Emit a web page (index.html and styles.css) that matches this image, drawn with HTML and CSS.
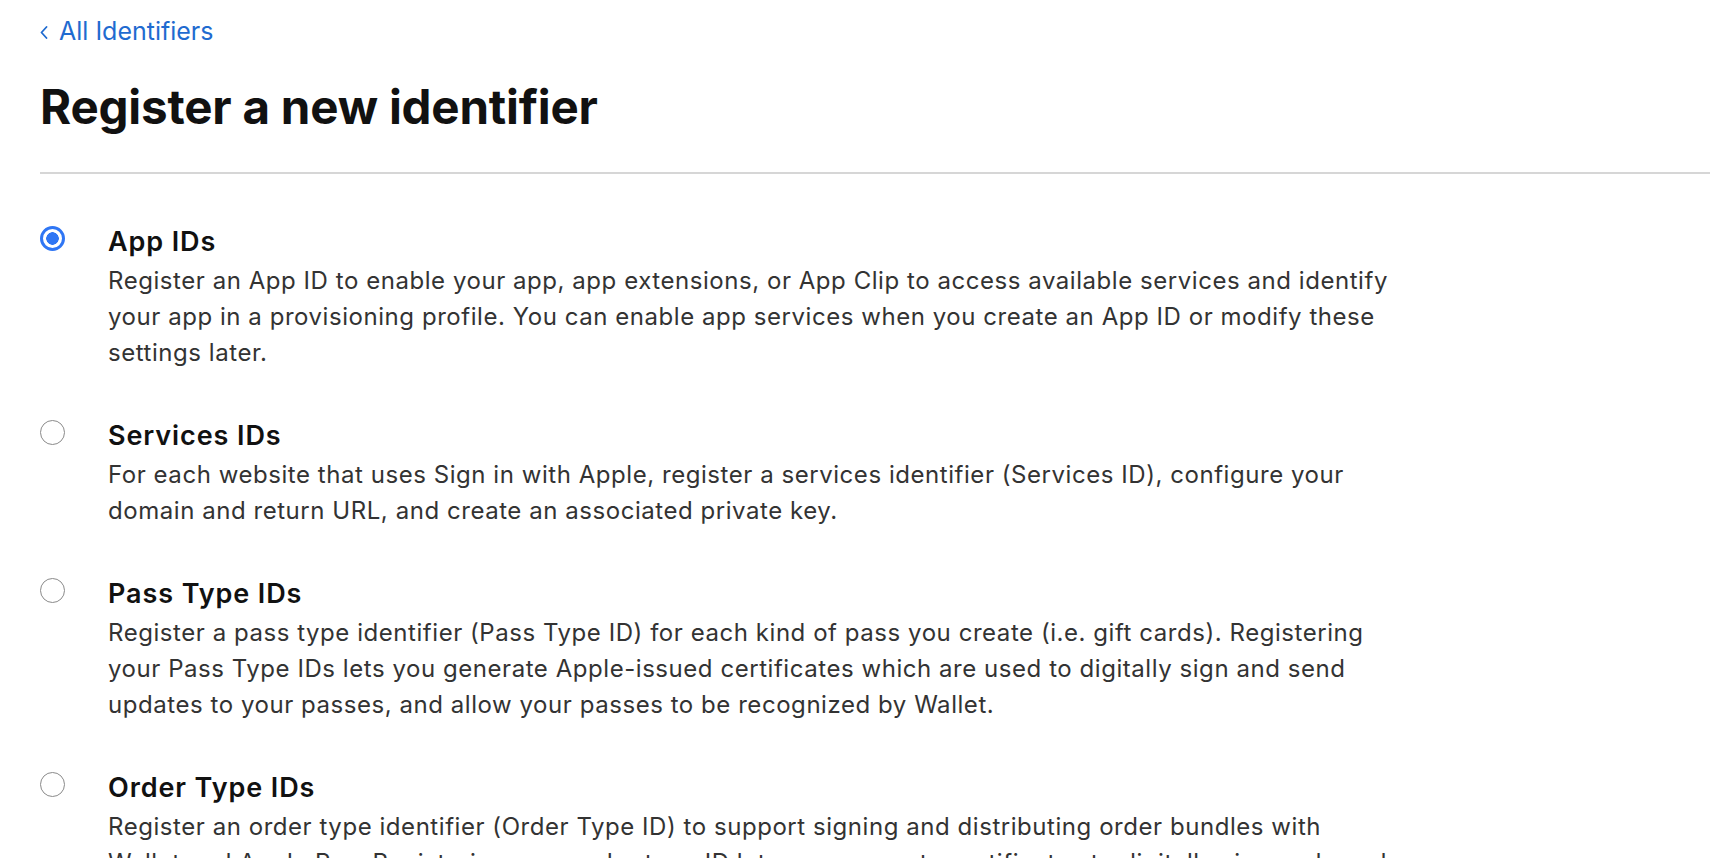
FILE: index.html
```html
<!DOCTYPE html>
<html lang="en">
<head>
<meta charset="utf-8">
<title>Register a new identifier</title>
<link rel="stylesheet" href="styles.css">
</head>
<body>
<div class="page">
  <a class="back" href="#">
    <svg class="chev" width="8" height="13" viewBox="0 0 8 13" aria-hidden="true"><path d="M6.5 1 L1.5 6.5 L6.5 12" fill="none" stroke="currentColor" stroke-width="1.8" stroke-linecap="round" stroke-linejoin="round"/></svg>
    <span>All Identifiers</span>
  </a>
  <h1 class="title">Register a new identifier</h1>
</div>
<hr class="divider">
<div class="page">
  <ul class="options">
    <li class="option">
      <span class="radio checked"></span>
      <div class="body">
        <h2 class="name">App IDs</h2>
        <p class="desc">Register an App ID to enable your app, app extensions, or App Clip to access available services and identify your app in a provisioning profile. You can enable app services when you create an App ID or modify these settings later.</p>
      </div>
    </li>
    <li class="option">
      <span class="radio"></span>
      <div class="body">
        <h2 class="name">Services IDs</h2>
        <p class="desc">For each website that uses Sign in with Apple, register a services identifier (Services ID), configure your domain and return URL, and create an associated private key.</p>
      </div>
    </li>
    <li class="option">
      <span class="radio"></span>
      <div class="body">
        <h2 class="name">Pass Type IDs</h2>
        <p class="desc">Register a pass type identifier (Pass Type ID) for each kind of pass you create (i.e. gift cards). Registering your Pass Type IDs lets you generate Apple-issued certificates which are used to digitally sign and send updates to your passes, and allow your passes to be recognized by Wallet.</p>
      </div>
    </li>
    <li class="option">
      <span class="radio"></span>
      <div class="body">
        <h2 class="name">Order Type IDs</h2>
        <p class="desc">Register an order type identifier (Order Type ID) to support signing and distributing order bundles with Wallet and Apple Pay. Registering your order type ID lets you generate certificates to digitally sign and send updates to your orders.</p>
      </div>
    </li>
  </ul>
</div>
</body>
</html>
```

FILE: styles.css
```css
html, body {
  margin: 0;
  padding: 0;
  background: #ffffff;
}
body {
  font-family: Inter, "Noto Sans", "Liberation Sans", sans-serif;
  color: #1d1d1f;
  overflow: hidden;
}
.page {
  padding-left: 40px;
}
.back {
  display: flex;
  align-items: center;
  gap: 11px;
  height: 62px;
  color: #1f6bd0;
  text-decoration: none;
  font-size: 25px;
  line-height: 62px;
}
.chev {
  display: block;
  margin-top: 2px;
}
.title {
  margin: 0;
  font-size: 47.5px;
  font-weight: 700;
  line-height: 90px;
  color: #111111;
  letter-spacing: -0.2px;
}
.divider {
  margin: 20px 0 0 40px;
  border: 0;
  height: 2px;
  background: #d6d6d6;
}
.options {
  list-style: none;
  margin: 0;
  padding: 47px 0 0 0;
}
.option {
  display: flex;
  gap: 43px;
  margin-bottom: 44px;
}
.radio {
  flex: none;
  box-sizing: border-box;
  width: 25px;
  height: 25px;
  margin-top: 5px;
  border-radius: 50%;
  border: 1.5px solid #8a8a8a;
  background: #fff;
}
.radio.checked {
  border: 3px solid #2f76f4;
  background: radial-gradient(circle, #2f76f4 0 6px, #fff 6.5px);
}
.body {
  width: 1285px;
}
.name {
  margin: 0;
  font-size: 27px;
  font-weight: 600;
  line-height: 42px;
  color: #111111;
  letter-spacing: 0.9px;
}
.desc {
  margin: 0;
  font-size: 24px;
  line-height: 36px;
  color: #333333;
  letter-spacing: 0.55px;
}
```
